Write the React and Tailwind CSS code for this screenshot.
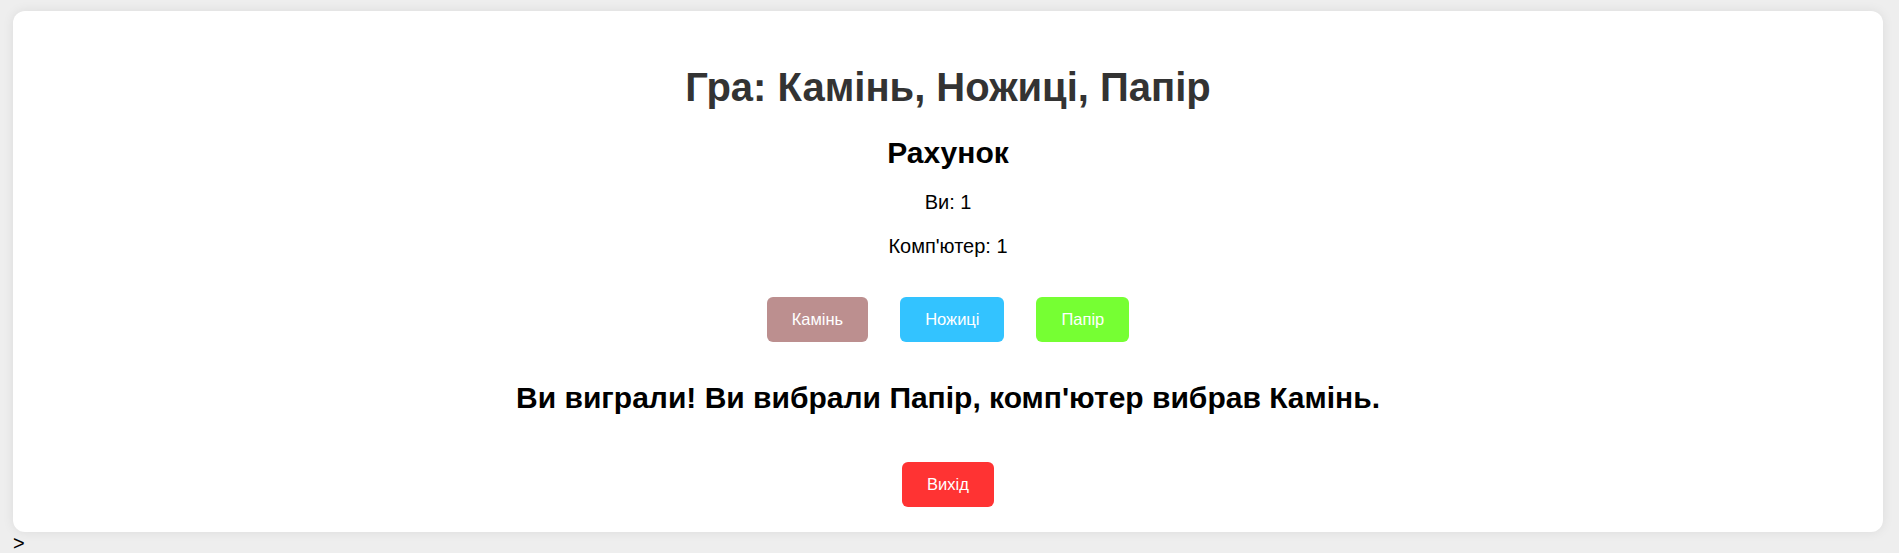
import { useState } from 'react';

const choices = [
  { name: 'Камінь', cls: 'bg-[#bc8f8f]' },
  { name: 'Ножиці', cls: 'bg-[#33c3ff]' },
  { name: 'Папір', cls: 'bg-[#76ff33]' },
];

export default function App() {
  const [score, setScore] = useState({ you: 1, cpu: 1 });
  const [result, setResult] = useState('Ви виграли! Ви вибрали Папір, комп\'ютер вибрав Камінь.');

  const play = (pick) => {
    const cpu = choices[Math.floor(Math.random() * 3)].name;
    const beats = { 'Камінь': 'Ножиці', 'Ножиці': 'Папір', 'Папір': 'Камінь' };
    if (pick === cpu) {
      setResult(`Нічия! Ви обидва вибрали ${pick}.`);
    } else if (beats[pick] === cpu) {
      setScore(s => ({ ...s, you: s.you + 1 }));
      setResult(`Ви виграли! Ви вибрали ${pick}, комп'ютер вибрав ${cpu}.`);
    } else {
      setScore(s => ({ ...s, cpu: s.cpu + 1 }));
      setResult(`Ви програли! Ви вибрали ${pick}, комп'ютер вибрав ${cpu}.`);
    }
  };

  return (
    <div className="min-h-[553px] bg-[#eeeeee] pl-[13px] pr-[16px] pt-[11px] font-['Liberation_Sans',Arial,sans-serif] text-black">
      <div className="bg-white rounded-[12px] shadow-[0_0_12px_rgba(0,0,0,0.08)] pt-[53px] pb-[25px] text-center">
        <h1 className="text-[40px] leading-[46px] font-bold text-[#333333]">Гра: Камінь, Ножиці, Папір</h1>
        <h2 className="mt-[25px] text-[30px] leading-[35px] font-bold">Рахунок</h2>
        <p className="mt-[21px] text-[20px] leading-[23px]">Ви: {score.you}</p>
        <p className="mt-[21px] text-[20px] leading-[23px]">Комп'ютер: {score.cpu}</p>
        <div className="mt-[39px] flex justify-center gap-[32px]">
          {choices.map(c => (
            <button key={c.name} onClick={() => play(c.name)}
              className={`${c.cls} h-[45px] px-[25px] rounded-[6px] text-white text-[16.5px] leading-[19px]`}>
              {c.name}
            </button>
          ))}
        </div>
        <h2 className="mt-[38px] text-[30px] leading-[35px] font-bold">{result}</h2>
        <div className="mt-[47px] flex justify-center">
          <button className="bg-[#ff3333] h-[45px] w-[92px] rounded-[6px] text-white text-[16.5px] leading-[19px]">
            Вихід
          </button>
        </div>
      </div>
      <div className="text-[20px] leading-[22px]">&gt;</div>
    </div>
  );
}
